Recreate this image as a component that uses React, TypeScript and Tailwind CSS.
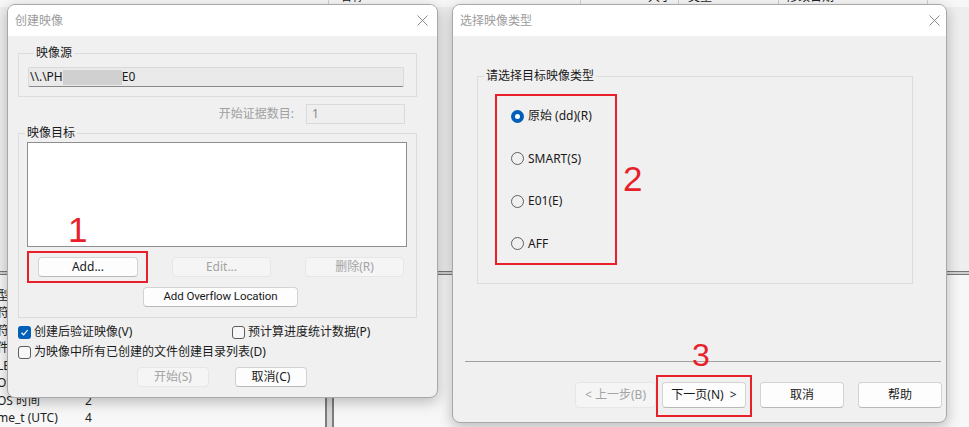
import React from "react";

const F = "font-['Noto_Sans','Noto_Sans_CJK_SC',sans-serif]";
const RED = "font-['Liberation_Sans',sans-serif] text-[#e8202a] leading-none";

function CloseX() {
  return (
    <svg width="11" height="11" viewBox="0 0 11 11">
      <path d="M0.5 0.5 L10.5 10.5 M10.5 0.5 L0.5 10.5" stroke="#8a8a8a" strokeWidth="1" fill="none" />
    </svg>
  );
}

function Btn({
  children,
  className = "",
  disabled = false,
}: {
  children: React.ReactNode;
  className?: string;
  disabled?: boolean;
}) {
  return (
    <div
      className={
        "relative flex items-center justify-center rounded-[4px] border whitespace-pre " +
        (disabled
          ? "bg-[#f5f5f5] border-[#e6e6e6] text-[#a3a3a3] "
          : "bg-[#fdfdfd] border-[#d3d3d3] border-b-[#b9b9b9] text-[#1a1a1a] ") +
        className
      }
    >
      {children}
    </div>
  );
}

function Check({ checked = false }: { checked?: boolean }) {
  return checked ? (
    <div className="w-[13px] h-[13px] rounded-[3px] bg-[#005fb8] flex items-center justify-center">
      <svg width="9" height="9" viewBox="0 0 9 9">
        <path d="M1.5 4.8 L3.6 6.8 L7.6 2.2" stroke="white" strokeWidth="1.2" fill="none" />
      </svg>
    </div>
  ) : (
    <div className="w-[13px] h-[13px] rounded-[3px] border border-[#5c5c5c] bg-[#f7f7f7]" />
  );
}

function Radio({ checked = false, label }: { checked?: boolean; label: string }) {
  return (
    <div className="flex items-center h-[20px] gap-[4px] text-[12px] text-[#1a1a1a]">
      {checked ? (
        <div className="w-[13px] h-[13px] rounded-full bg-[#005fb8] flex items-center justify-center">
          <div className="w-[5px] h-[5px] rounded-full bg-white" />
        </div>
      ) : (
        <div className="w-[13px] h-[13px] rounded-full border border-[#5f5f5f]" />
      )}
      <span>{label}</span>
    </div>
  );
}

function TitleBar({ title, pr }: { title: string; pr: string }) {
  return (
    <div className={"h-[31px] bg-white flex items-center justify-between pl-[7px] " + pr}>
      <span className="text-[12px] text-[#9c9c9c]">{title}</span>
      <CloseX />
    </div>
  );
}

function Background() {
  const rows: [string, string][] = [
    ["型", ""],
    ["符", ""],
    ["符", ""],
    ["件", ""],
    ["LE", ""],
    ["OS", ""],
    ["OS 时间", "2"],
    ["me_t (UTC)", "4"],
  ];
  return (
    <div className="flex flex-col h-[427px] bg-[#eeeeee] text-[12px] text-[#222]">
      <div className="flex h-[20px] -mt-[13px] bg-[#f7f7f7]">
        <div className="w-[328px]" />
        <div className="w-[252px] border-l border-[#d0d0d0] pl-[11px] flex items-center">名称</div>
        <div className="w-[98px] border-l border-[#d0d0d0] flex items-center justify-end pr-[6px]">大小</div>
        <div className="w-[100px] border-l border-[#d0d0d0] pl-[9px] flex items-center">类型</div>
        <div className="w-[149px] border-l border-[#d0d0d0] pl-[7px] flex items-center">修改日期</div>
        <div className="flex-1 border-l border-[#d0d0d0]" />
      </div>
      <div className="h-[266px]" />
      <div className="h-[4px] border-y border-[#777] bg-[#cfcfcf]" />
      <div className="flex flex-1 bg-[#f7f7f7]">
        <div className="w-[328px] pt-[12px] flex flex-col -ml-[3px]">
          {rows.map(([a, b], i) => (
            <div key={i} className="h-[17.5px] flex items-center">
              <span className="w-[88px]">{a}</span>
              <span>{b}</span>
            </div>
          ))}
        </div>
        <div className="w-[9px] border-x-2 border-[#7d7d7d] bg-[#d6d6d6]" />
        <div className="flex-1" />
      </div>
    </div>
  );
}

function LeftDialog() {
  return (
    <div className="absolute left-[7px] top-[4px] w-[431px] h-[394px] rounded-[8px] border border-[#a8a8a8] bg-[#f0f0f0] overflow-hidden shadow-[0_4px_14px_rgba(0,0,0,0.25)] flex flex-col">
      <TitleBar title="创建映像" pr="pr-[9px]" />
      <div className="flex flex-col text-[12px] text-[#1a1a1a]">
        <fieldset className="mt-[9px] ml-[10px] w-[399px] border border-[#dcdcdc] px-[9px] pb-[9px]">
          <legend className="ml-[6px] px-[2px] leading-[16px]">映像源</legend>
          <div className="mt-[6px] w-[376px] h-[20px] bg-[#eaeaea] border border-[#d9d9d9] border-b-[#8a8a8a] rounded-[2px] flex items-center pl-[1px]">
            <span>\\.\PH</span>
            <div className="w-[59px] h-[15px] bg-[#d0d0d0]" />
            <span>E0</span>
          </div>
        </fieldset>
        <div className="mt-[7px] flex items-center justify-end pr-[32px] gap-[12px]">
          <span className="text-[#a0a0a0]">开始证据数目:</span>
          <div className="w-[99px] h-[20px] bg-[#efefef] border border-[#dadada] flex items-center pl-[5px] text-[#8a8a8a]">1</div>
        </div>
        <fieldset className="mt-[1px] ml-[10px] w-[399px] border border-[#dcdcdc] pb-[10px]">
          <legend className="ml-[6px] px-[2px] leading-[16px]">映像目标</legend>
          <div className="mt-[1px] ml-[8px] w-[380px] h-[105px] bg-white border border-[#8e8e8e]" />
          <div className="mt-[10px] ml-[19px] flex gap-[34px] text-[12px]">
            <Btn className="w-[100px] h-[20px]">
              Add...
              <div className="absolute -left-[12px] -top-[7px] w-[121px] h-[32px] border-2 border-[#e8202a]" />
              <div className={"absolute left-[29px] -top-[46px] text-[35px] " + RED}>1</div>
            </Btn>
            <Btn disabled className="w-[99px] h-[20px]">Edit...</Btn>
            <Btn disabled className="w-[99px] h-[20px]">删除(R)</Btn>
          </div>
          <Btn className="mt-[10px] ml-[124px] w-[155px] h-[20px] text-[11.5px] tracking-[-0.1px] font-['Roboto',sans-serif]">Add Overflow Location</Btn>
        </fieldset>
        <div className="mt-[4px] ml-[10px] h-[20px] flex items-center">
          <div className="w-[214px] flex items-center gap-[3px]">
            <Check checked />
            <span>创建后验证映像(V)</span>
          </div>
          <div className="flex items-center gap-[3px]">
            <Check />
            <span>预计算进度统计数据(P)</span>
          </div>
        </div>
        <div className="ml-[10px] h-[20px] flex items-center gap-[3px]">
          <Check />
          <span>为映像中所有已创建的文件创建目录列表(D)</span>
        </div>
        <div className="mt-[5px] ml-[129px] flex gap-[26px] text-[12px]">
          <Btn disabled className="w-[72px] h-[20px]">开始(S)</Btn>
          <Btn className="w-[72px] h-[20px]">取消(C)</Btn>
        </div>
      </div>
    </div>
  );
}

function RightDialog() {
  return (
    <div className="absolute left-[452px] top-[4px] w-[495px] h-[419px] rounded-[8px] border border-[#a8a8a8] bg-[#f0f0f0] overflow-hidden shadow-[0_4px_14px_rgba(0,0,0,0.25)] flex flex-col">
      <TitleBar title="选择映像类型" pr="pr-[6px]" />
      <div className="flex flex-col text-[12px] text-[#1a1a1a]">
        <fieldset className="mt-[32px] ml-[24px] w-[436px] border border-[#dcdcdc] pb-[29px]">
          <legend className="ml-[6px] px-[2px] leading-[16px]">请选择目标映像类型</legend>
          <div className="relative mt-[22px] ml-[33px] w-[90px] flex flex-col gap-[22.5px]">
            <Radio checked label="原始 (dd)(R)" />
            <Radio label="SMART(S)" />
            <Radio label="E01(E)" />
            <Radio label="AFF" />
            <div className="absolute -left-[16px] -top-[12px] w-[122px] h-[171px] border-2 border-[#e8202a]" />
            <div className={"absolute left-[112px] top-[55px] text-[35px] " + RED}>2</div>
          </div>
        </fieldset>
        <div className="mt-[77px] ml-[12px] w-[476px] h-px bg-[#a0a0a0]" />
        <div className="mt-[20px] flex justify-end pr-[4px] text-[12px]">
          <Btn disabled className="w-[81px] h-[26px]">&lt; 上一步(B)</Btn>
          <Btn className="ml-[6px] w-[84px] h-[26px]">
            {"下一页(N)  >"}
            <div className="absolute -left-[7px] -top-[8px] w-[96px] h-[42px] border-2 border-[#e8202a]" />
            <div className={"absolute left-[29px] -top-[44px] text-[32px] " + RED}>3</div>
          </Btn>
          <Btn className="ml-[14px] w-[84px] h-[26px]">取消</Btn>
          <Btn className="ml-[14px] w-[84px] h-[26px]">帮助</Btn>
        </div>
      </div>
    </div>
  );
}

export default function App() {
  return (
    <div className={"relative w-[969px] h-[427px] overflow-hidden " + F}>
      <Background />
      <LeftDialog />
      <RightDialog />
    </div>
  );
}
